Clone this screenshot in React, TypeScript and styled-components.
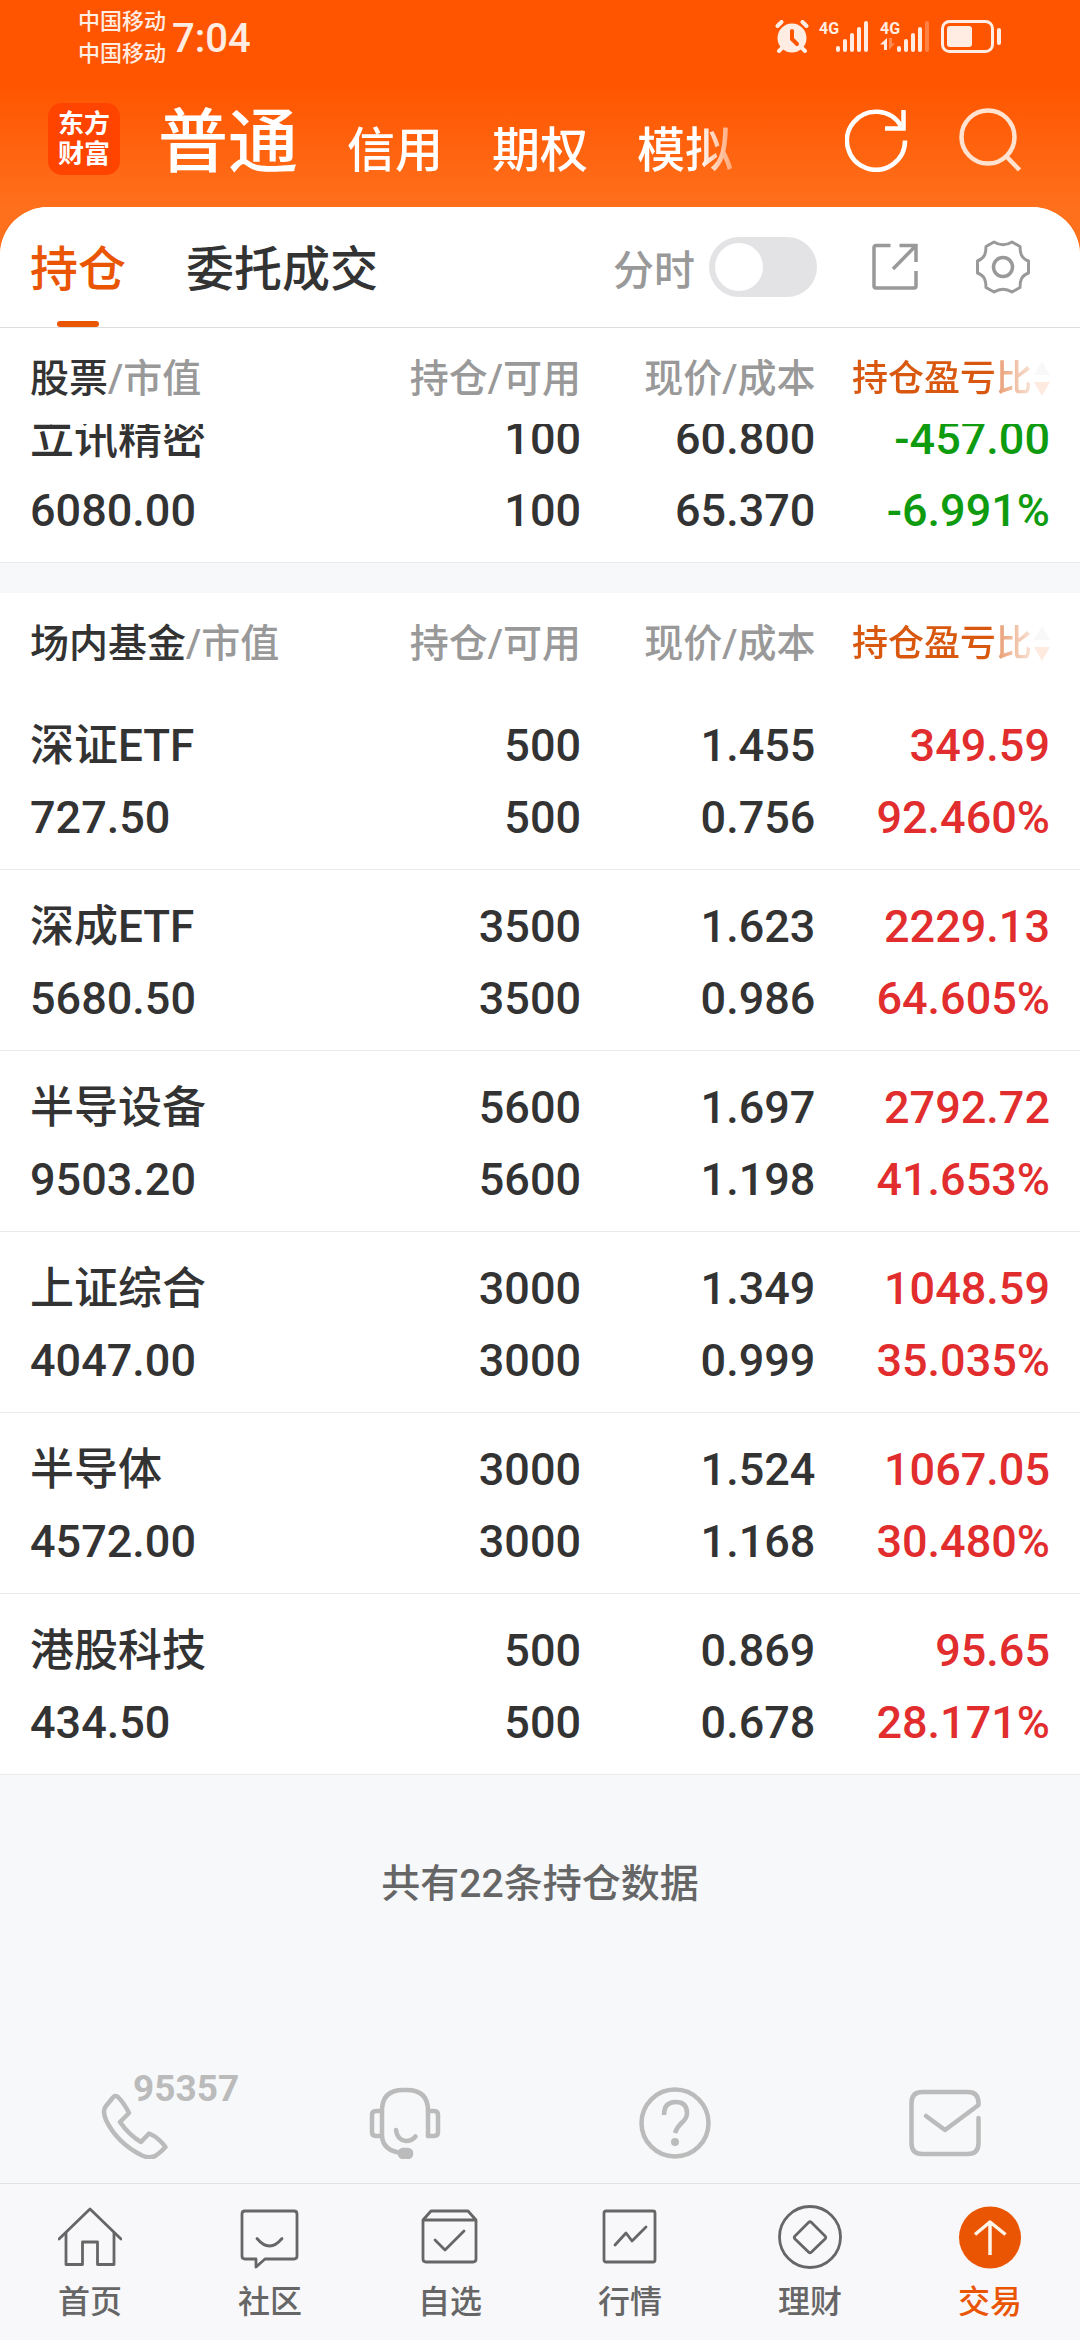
import React from "react";
import styled, { createGlobalStyle, css } from "styled-components";

const color = {
  brand: "#ea5504",
  headerTop: "#ff5500",
  headerBottom: "#ff701c",
  ink: "#333333",
  muted: "#999999",
  soft: "#bbbbbb",
  nav: "#666666",
  up: "#e12d2d",
  down: "#0f9b0f",
  page: "#f7f8fa",
  line: "#ebebed",
  status: "#ffece2",
};

const GlobalStyle = createGlobalStyle`
  *, *::before, *::after { box-sizing: border-box; }
  body {
    margin: 0;
    background: ${color.page};
    color: ${color.ink};
    font-family: Roboto, "Noto Sans CJK SC", sans-serif;
    font-weight: 500;
  }
  button, input { font: inherit; }
  svg { display: block; flex: none; }
`;

const Page = styled.div`
  min-height: 100vh;
  display: flex;
  flex-direction: column;
`;

/* ---------- header ---------- */

const Header = styled.header`
  background: linear-gradient(${color.headerTop} 84px, ${color.headerBottom} 207px);
  padding-bottom: 48px;
`;

const StatusBar = styled.div`
  height: 84px;
  padding: 6px 78px 0 78px;
  display: flex;
  align-items: flex-start;
  justify-content: space-between;
  color: ${color.status};
`;

const StatusGroup = styled.div`
  display: flex;
  gap: 6px;
`;

const Carriers = styled.div`
  display: flex;
  flex-direction: column;
  font-size: 22px;
  line-height: 32px;
`;

const Clock = styled.time`
  font-size: 40px;
  line-height: 66px;
`;

const StatusIcons = styled.div`
  display: flex;
  gap: 10px;
  padding-top: 14px;
`;

const Signal = styled.div`
  display: flex;
`;

const Network = styled.span`
  width: 17px;
  font-size: 16px;
  line-height: 18px;
  font-weight: 700;
`;

const TitleBar = styled.div`
  height: 123px;
  padding: 0 59px 0 48px;
  display: flex;
  align-items: flex-start;
`;

const Logo = styled.div`
  flex: none;
  width: 72px;
  height: 72px;
  margin-top: 19px;
  border-radius: 14px;
  background: #ff4400;
  color: #fff;
  display: grid;
  place-content: center;
  text-align: center;
  font-size: 26px;
  line-height: 30px;
  font-weight: 700;
`;

const Accounts = styled.nav`
  flex: 1;
  margin-left: 38px;
  display: flex;
  align-items: baseline;
  gap: 49px;
  overflow: hidden;
  white-space: nowrap;
  mask-image: linear-gradient(to right, #000 540px, transparent 600px);
`;

const Account = styled.button<{ $current?: boolean }>`
  border: 0;
  padding: 0;
  background: none;
  color: #fff;
  font-size: ${(p) => (p.$current ? 70 : 48)}px;
  line-height: 118px;
`;

const HeaderActions = styled.div`
  display: flex;
  gap: 51px;
  margin-top: 24px;
`;

const IconButton = styled.button`
  border: 0;
  padding: 0;
  background: none;
  color: inherit;
`;

const WhiteIconButton = styled(IconButton)<{ $tint?: string }>`
  color: ${(p) => p.$tint ?? "#fff"};
`;

/* ---------- panel ---------- */

const Panel = styled.main`
  flex: 1;
  margin-top: -48px;
  display: flex;
  flex-direction: column;
  border-radius: 48px 48px 0 0;
  overflow: hidden;
  background: ${color.page};
`;

const Toolbar = styled.div`
  height: 121px;
  padding: 0 50px 0 30px;
  display: flex;
  align-items: stretch;
  background: #fff;
  border-bottom: 1px solid #dddddd;
`;

const Tabs = styled.div`
  display: flex;
  gap: 60px;
`;

const Tab = styled.button<{ $current?: boolean }>`
  border: 0;
  padding: 6px 0 0;
  background: none;
  display: flex;
  flex-direction: column;
  align-items: center;
  justify-content: space-between;
  font-size: 48px;
  line-height: 114px;
  color: ${(p) => (p.$current ? color.brand : color.ink)};
  ${(p) =>
    p.$current &&
    css`
      &::after {
        content: "";
        width: 42px;
        height: 6px;
        margin-top: -6px;
        border-radius: 3px;
        background: ${color.brand};
      }
    `}
`;

const Tools = styled.div`
  margin-left: auto;
  display: flex;
  align-items: center;
  color: ${color.muted};
`;

const ToggleLabel = styled.label`
  display: flex;
  align-items: center;
  gap: 14px;
  margin-right: 55px;
  font-size: 41px;
`;

const Toggle = styled.input`
  appearance: none;
  width: 108px;
  height: 60px;
  margin: 0;
  padding: 6px;
  border-radius: 30px;
  background: #e3e3e5;
  &::before {
    content: "";
    display: block;
    width: 48px;
    height: 48px;
    border-radius: 50%;
    background: #fff;
  }
  &:checked {
    background: ${color.brand};
  }
  &:checked::before {
    margin-left: auto;
  }
`;

const ToolButton = styled(IconButton)`
  & + & {
    margin-left: 58px;
  }
`;

/* ---------- holdings ---------- */

const Holdings = styled.table`
  width: 100%;
  table-layout: fixed;
  border-collapse: collapse;
  background: #fff;
  & + & {
    margin-top: 30px;
  }
`;

const Column = styled.col<{ $share?: string }>`
  width: ${(p) => p.$share ?? "auto"};
`;

const HeadCell = styled.th<{ $first?: boolean }>`
  height: 96px;
  padding: 5px 0 0 ${(p) => (p.$first ? 30 : 0)}px;
  text-align: ${(p) => (p.$first ? "left" : "right")};
  font-size: 39px;
  font-weight: 500;
  line-height: 48px;
  white-space: nowrap;
  color: ${color.muted};
`;

const SortCell = styled(HeadCell)`
  padding-right: 30px;
`;

const Strong = styled.span`
  color: ${color.ink};
`;

const SortButton = styled.button`
  width: 100%;
  border: 0;
  padding: 0;
  background: none;
  display: flex;
  align-items: center;
  justify-content: flex-end;
  gap: 2px;
  font-size: 36px;
  line-height: 48px;
  color: #d9580f;
  mask-image: linear-gradient(
    to right,
    #000 calc(100% - 58px),
    rgba(0, 0, 0, 0.6) calc(100% - 54px),
    rgba(0, 0, 0, 0.12) calc(100% - 14px)
  );
`;

const Cell = styled.td<{ $first?: boolean; $last?: boolean; $tone?: string }>`
  padding: 0 ${(p) => (p.$last ? 30 : 0)}px 0 ${(p) => (p.$first ? 30 : 0)}px;
  border-bottom: 1px solid ${color.line};
  text-align: ${(p) => (p.$first ? "left" : "right")};
  color: ${(p) => p.$tone ?? color.ink};
`;

const Pair = styled.div<{ $scrolled?: boolean }>`
  height: ${(p) => (p.$scrolled ? 138 : 180)}px;
  padding-bottom: 15px;
  overflow: hidden;
  display: flex;
  flex-direction: column;
  justify-content: flex-end;
  font-size: 45px;
  line-height: 72px;
  white-space: nowrap;
`;

const Line = styled.span`
  flex: none;
`;

const Name = styled(Line)`
  font-size: 44px;
`;

const Summary = styled.p`
  margin: 0;
  padding-top: 85px;
  text-align: center;
  font-size: 39px;
  line-height: 48px;
  color: ${color.nav};
`;

/* ---------- footer ---------- */

const Support = styled.div`
  margin-top: auto;
  padding-bottom: 24px;
  display: grid;
  grid-template-columns: repeat(4, 1fr);
  justify-items: center;
  color: ${color.soft};
`;

const SupportLink = styled.a`
  position: relative;
  color: inherit;
  text-decoration: none;
`;

const Hotline = styled.span`
  position: absolute;
  left: 34px;
  top: -17px;
  font-size: 37px;
  line-height: 38px;
  font-weight: 700;
`;

const BottomNav = styled.nav`
  height: 157px;
  display: grid;
  grid-template-columns: repeat(6, 1fr);
  border-top: 1px solid #e2e2e4;
  background: #f8f8fa;
`;

const NavLink = styled.a<{ $current?: boolean }>`
  display: flex;
  flex-direction: column;
  align-items: center;
  padding-top: 21px;
  gap: 9px;
  font-size: 32px;
  line-height: 48px;
  text-decoration: none;
  color: ${(p) => (p.$current ? color.brand : color.nav)};
`;

/* ---------- icons ---------- */

const AlarmIcon = () => (
  <svg width="34" height="33" viewBox="0 0 34 33" fill="none">
    <circle cx="17" cy="18" r="14.500" fill={color.status} />
    <path d="M2.500 6l4-4M31.500 6l-4-4M7 28l-3 3M27 28l3 3" stroke={color.status} strokeWidth="4" strokeLinecap="round" />
    <path d="M17 11v8l5 5" stroke="#ff5500" strokeWidth="4" strokeLinecap="round" strokeLinejoin="round" />
  </svg>
);

const Bars = ({ weak }: { weak?: boolean }) => (
  <svg width="34" height="33" viewBox="0 0 34 33" fill={color.status}>
    <rect x="0" y="26" width="4" height="6" rx="2" />
    <rect x="7" y="19" width="4" height="13" rx="2" />
    <rect x="14" y="13" width="4" height="19" rx="2" />
    <rect x="21" y="7" width="4" height="25" rx="2" />
    <rect x="28" y="1" width="4" height="31" rx="2" opacity={weak ? 0.3 : 1} />
  </svg>
);

const DataArrows = () => (
  <svg width="16" height="12" viewBox="0 0 16 12" fill={color.status}>
    <path d="M7 0v12H4V6.500H0z" />
    <path d="M9 0v12l6-6.500h-3V0z" opacity="0.35" />
  </svg>
);

const BatteryIcon = () => (
  <svg width="61" height="33" viewBox="0 0 61 33" fill="none">
    <rect x="1.500" y="1.500" width="50" height="30" rx="7" stroke={color.status} strokeWidth="3" />
    <rect x="6" y="6" width="25" height="21" rx="3" fill={color.status} />
    <rect x="56" y="8" width="4" height="17" rx="2" fill={color.status} />
  </svg>
);

const RefreshIcon = () => (
  <svg width="63" height="64" viewBox="0 0 63 64" fill="none" stroke="currentColor" strokeWidth="4.500">
    <path d="M60 32.500A29 29 0 1 1 56 18" />
    <path d="M58.500 2v18.500H40" />
  </svg>
);

const SearchIcon = () => (
  <svg width="62" height="64" viewBox="0 0 62 64" fill="none" stroke="currentColor" strokeWidth="4.500">
    <circle cx="29" cy="29" r="26.500" />
    <path d="M47 48l13.500 14" />
  </svg>
);

const ShareIcon = () => (
  <svg width="46" height="48" viewBox="0 0 46 48" fill="none" stroke="currentColor" strokeWidth="3.500">
    <path d="M18.500 2.500H4a2 2 0 0 0-2 2V43a2 2 0 0 0 2 2h38a2 2 0 0 0 2-2V28" />
    <path d="M27.500 2.500H44V19M44 2.500L21 26" />
  </svg>
);

const GearIcon = () => (
  <svg width="54" height="54" viewBox="0 0 54 54" fill="none" stroke="currentColor" strokeWidth="3" strokeLinejoin="round">
    <path d="M18 2Q27 7.500 36 2L44 6.500C44 13 45 18 52.500 21V33C45 36 44 41 44 47.500L36 52Q27 46.500 18 52L10 47.500C10 41 9 36 1.500 33V21C9 18 10 13 10 6.500Z" />
    <circle cx="27" cy="27" r="9.500" strokeWidth="3.500" />
  </svg>
);

const SortIcon = () => (
  <svg width="16" height="35" viewBox="0 0 16 35">
    <path d="M8 0l8 14H0z" fill="#c4c4c4" />
    <path d="M8 35l8-14H0z" fill="#ff5500" />
  </svg>
);

const SupportIcon = ({ children }: { children: React.ReactNode }) => (
  <svg width="72" height="72" viewBox="0 0 72 72" fill="none" stroke="currentColor" strokeWidth="4.500" strokeLinecap="round" strokeLinejoin="round">
    {children}
  </svg>
);

const NavIcon = ({ children }: { children: React.ReactNode }) => (
  <svg width="64" height="64" viewBox="0 0 64 64" fill="none" stroke="currentColor" strokeWidth="2.800" strokeLinecap="round" strokeLinejoin="round">
    {children}
  </svg>
);

/* ---------- data ---------- */

type Holding = {
  name: string;
  value: string;
  held: string;
  usable: string;
  price: string;
  cost: string;
  profit: string;
  ratio: string;
};

const row = (
  name: string, value: string, held: string, usable: string,
  price: string, cost: string, profit: string, ratio: string,
): Holding => ({ name, value, held, usable, price, cost, profit, ratio });

const stocks = [row("立讯精密", "6080.00", "100", "100", "60.800", "65.370", "-457.00", "-6.991%")];

const funds = [
  row("深证ETF", "727.50", "500", "500", "1.455", "0.756", "349.59", "92.460%"),
  row("深成ETF", "5680.50", "3500", "3500", "1.623", "0.986", "2229.13", "64.605%"),
  row("半导设备", "9503.20", "5600", "5600", "1.697", "1.198", "2792.72", "41.653%"),
  row("上证综合", "4047.00", "3000", "3000", "1.349", "0.999", "1048.59", "35.035%"),
  row("半导体", "4572.00", "3000", "3000", "1.524", "1.168", "1067.05", "30.480%"),
  row("港股科技", "434.50", "500", "500", "0.869", "0.678", "95.65", "28.171%"),
];

const navItems = [
  {
    label: "首页",
    icon: (
      <>
        <path d="M1 34L32 4l31 30" />
        <path d="M8 28v31.500h16.500V37h15v22.500H56V28" />
      </>
    ),
  },
  {
    label: "社区",
    icon: (
      <>
        <path d="M7 6h49q3 0 3 3v42q0 3-3 3H27l-9 8v-8H7q-3 0-3-3V9q0-3 3-3z" />
        <path d="M19 33.500q12.500 15 25 0" />
      </>
    ),
  },
  {
    label: "自选",
    icon: (
      <>
        <path d="M5 15l8-9h37l8 9v39q0 3-3 3H8q-3 0-3-3zM5 15h53" />
        <path d="M17 35l10 10 19-19" />
      </>
    ),
  },
  {
    label: "行情",
    icon: (
      <>
        <rect x="6" y="6" width="51" height="51" rx="2" />
        <path d="M17 40l11-12 6 8 14-14" />
      </>
    ),
  },
  {
    label: "理财",
    icon: (
      <>
        <circle cx="32" cy="32" r="30.500" />
        <path d="M30.500 17.500q1.500-1.500 3 0L47 31q1.500 1.500 0 3L33.500 47q-1.500 1.500-3 0L17 34q-1.500-1.500 0-3z" />
      </>
    ),
  },
  {
    label: "交易",
    current: true,
    icon: (
      <>
        <circle cx="32" cy="32.500" r="31" fill="currentColor" stroke="none" />
        <path d="M32 50V18M17 29.500L32 17l15.500 12.500" stroke="#fff4e8" strokeWidth="3.500" strokeLinecap="butt" />
      </>
    ),
  },
];

/* ---------- sections ---------- */

function HoldingsTable({ title, rows, scrolled }: { title: string; rows: Holding[]; scrolled?: boolean }) {
  return (
    <Holdings>
      <colgroup>
        <Column />
        <Column $share="24%" />
        <Column $share="21.700%" />
        <Column $share="24.500%" />
      </colgroup>
      <thead>
        <tr>
          <HeadCell $first><Strong>{title}</Strong>/市值</HeadCell>
          <HeadCell>持仓/可用</HeadCell>
          <HeadCell>现价/成本</HeadCell>
          <SortCell>
            <SortButton>持仓盈亏比<SortIcon /></SortButton>
          </SortCell>
        </tr>
      </thead>
      <tbody>
        {rows.map((r) => (
          <tr key={r.name}>
            <Cell $first>
              <Pair $scrolled={scrolled}><Name>{r.name}</Name><Line>{r.value}</Line></Pair>
            </Cell>
            <Cell>
              <Pair $scrolled={scrolled}><Line>{r.held}</Line><Line>{r.usable}</Line></Pair>
            </Cell>
            <Cell>
              <Pair $scrolled={scrolled}><Line>{r.price}</Line><Line>{r.cost}</Line></Pair>
            </Cell>
            <Cell $last $tone={r.profit.startsWith("-") ? color.down : color.up}>
              <Pair $scrolled={scrolled}><Line>{r.profit}</Line><Line>{r.ratio}</Line></Pair>
            </Cell>
          </tr>
        ))}
      </tbody>
    </Holdings>
  );
}

export default function App() {
  return (
    <Page>
      <GlobalStyle />
      <Header>
        <StatusBar>
          <StatusGroup>
            <Carriers><span>中国移动</span><span>中国移动</span></Carriers>
            <Clock>7:04</Clock>
          </StatusGroup>
          <StatusIcons>
            <AlarmIcon />
            <Signal><Network>4G</Network><Bars /></Signal>
            <Signal><Network>4G<DataArrows /></Network><Bars weak /></Signal>
            <BatteryIcon />
          </StatusIcons>
        </StatusBar>
        <TitleBar>
          <Logo><span>东方</span><span>财富</span></Logo>
          <Accounts>
            <Account $current>普通</Account>
            <Account>信用</Account>
            <Account>期权</Account>
            <Account>模拟</Account>
          </Accounts>
          <HeaderActions>
            <WhiteIconButton aria-label="刷新"><RefreshIcon /></WhiteIconButton>
            <WhiteIconButton aria-label="搜索" $tint="#ffe3d0"><SearchIcon /></WhiteIconButton>
          </HeaderActions>
        </TitleBar>
      </Header>

      <Panel>
        <Toolbar>
          <Tabs>
            <Tab $current>持仓</Tab>
            <Tab>委托成交</Tab>
          </Tabs>
          <Tools>
            <ToggleLabel htmlFor="intraday">
              分时
              <Toggle id="intraday" type="checkbox" />
            </ToggleLabel>
            <ToolButton aria-label="分享"><ShareIcon /></ToolButton>
            <ToolButton aria-label="设置"><GearIcon /></ToolButton>
          </Tools>
        </Toolbar>

        <HoldingsTable title="股票" rows={stocks} scrolled />
        <HoldingsTable title="场内基金" rows={funds} />

        <Summary>共有22条持仓数据</Summary>

        <Support>
          <SupportLink href="#hotline">
            <SupportIcon>
              <path d="M13.500 11Q16 7.500 19 10Q25 16 30 26L21 35Q30 48 42 55L50 46.500Q59 50 66.500 60Q62 65 57 68.500Q51 72 43 68.500Q18 56 7 33Q3 24 7 19Z" />
            </SupportIcon>
            <Hotline>95357</Hotline>
          </SupportLink>
          <SupportLink href="#service" aria-label="客服">
            <SupportIcon>
              <path d="M13 49V24Q13 3 34 3h4Q59 3 59 24V49" />
              <path d="M13 24H7q-4 0-4 4v17q0 4 4 4h6q1 15 20 17M59 24h6q4 0 4 4v17q0 4-4 4h-6" />
              <path d="M27 43q1 10 10 11 6 0 9.500-4.500" />
              <rect x="31" y="63" width="11" height="7" rx="3" fill="currentColor" />
            </SupportIcon>
          </SupportLink>
          <SupportLink href="#help" aria-label="帮助">
            <SupportIcon>
              <circle cx="36" cy="36" r="33.500" />
              <path d="M25 28Q25 15 36.500 15T48 26Q48 31 43 35.500T36 46" strokeLinecap="butt" />
              <circle cx="36" cy="55" r="4" fill="currentColor" stroke="none" />
            </SupportIcon>
          </SupportLink>
          <SupportLink href="#messages" aria-label="消息">
            <SupportIcon>
              <path d="M69.500 31v25q0 11-11 11h-45q-11 0-11-11V16q0-11 11-11h45q11 0 11 11v2L36 43 17 29" />
            </SupportIcon>
          </SupportLink>
        </Support>
      </Panel>

      <BottomNav>
        {navItems.map((item) => (
          <NavLink key={item.label} href={`#${item.label}`} $current={item.current}>
            <NavIcon>{item.icon}</NavIcon>
            {item.label}
          </NavLink>
        ))}
      </BottomNav>
    </Page>
  );
}
